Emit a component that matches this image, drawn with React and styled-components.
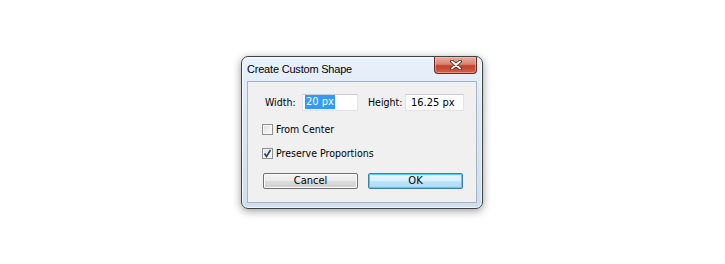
import React from "react";
import styled, { createGlobalStyle } from "styled-components";

const GlobalStyle = createGlobalStyle`
  html, body {
    margin: 0;
    padding: 0;
    background: #ffffff;
  }
  body {
    font-family: "DejaVu Sans Condensed", "DejaVu Sans", sans-serif;
  }
`;

const Page = styled.div`
  width: 100vw;
  height: 100vh;
  display: flex;
  align-items: center;
  justify-content: center;
`;

const Window = styled.div`
  position: relative;
  box-sizing: border-box;
  width: 242px;
  height: 153px;
  margin-left: -1px;
  border: 1px solid #3d4246;
  border-radius: 7px;
  background: linear-gradient(180deg, #eaf2fb 0%, #dce8f6 35%, #cfdef0 100%);
  box-shadow: 0 2px 8px rgba(0, 0, 0, 0.4), inset 0 0 0 1px rgba(255, 255, 255, 0.75);
  display: flex;
  flex-direction: column;
  padding: 0 5px 5px 5px;
`;

const TitleBar = styled.div`
  height: 24px;
  display: flex;
  align-items: center;
  font-family: "Liberation Sans", Arial, sans-serif;
  font-size: 11px;
  letter-spacing: -0.2px;
  color: #000;
`;

const CloseButton = styled.div`
  position: absolute;
  top: 0;
  right: 5px;
  width: 43px;
  height: 17px;
  box-sizing: border-box;
  border: 1px solid #6b2a1f;
  border-top: none;
  border-radius: 0 0 4px 4px;
  background: linear-gradient(180deg, #e9ad9f 0%, #d88371 45%, #c4412b 55%, #d0624a 100%);
  box-shadow: inset 0 0 0 1px rgba(255, 200, 190, 0.5);
  display: flex;
  align-items: center;
  justify-content: center;
`;

const Panel = styled.div`
  flex: 1;
  box-sizing: border-box;
  border: 1px solid #a6b4c4;
  background: #f0f0f0;
  display: flex;
  flex-direction: column;
  gap: 13px;
  padding: 12px 0 0 14px;
  font-size: 10.5px;
  color: #000;
`;

const FieldRow = styled.div`
  display: flex;
  align-items: center;
  height: 17px;
  padding-left: 3px;
`;

const Label = styled.span`
  width: ${(p) => p.$width}px;
  margin-left: ${(p) => p.$gap || 0}px;
`;

const Input = styled.div`
  box-sizing: border-box;
  width: ${(p) => p.$width}px;
  height: 17px;
  background: #fff;
  border: 1px solid #e2e3ea;
  border-top-color: #c9ccd4;
  padding-left: ${(p) => p.$pad}px;
  display: flex;
  align-items: center;
  font-size: 11px;
`;

const Selected = styled.span`
  background: #3399ff;
  color: #fff;
  line-height: 14px;
  padding: 0 1px;
`;

const CheckRow = styled.label`
  display: flex;
  align-items: center;
  height: 11px;
  gap: 3px;
`;

const Box = styled.span`
  box-sizing: border-box;
  width: 11px;
  height: 11px;
  border: 1px solid #8e8f8f;
  background: linear-gradient(135deg, #dcdcdc 0%, #f4f4f4 70%, #fafafa 100%);
  box-shadow: inset 0 0 0 1px #f7f7f7;
  display: flex;
  align-items: center;
  justify-content: center;
`;

const ButtonRow = styled.div`
  display: flex;
  gap: 10px;
  margin-top: 1px;
  padding-left: 1px;
`;

const Button = styled.div`
  box-sizing: border-box;
  width: 95px;
  height: 16px;
  border: 1px solid ${(p) => (p.$primary ? "#3c7fb1" : "#707070")};
  border-radius: 2px;
  background: ${(p) =>
    p.$primary
      ? "linear-gradient(180deg, #eaf6fd 0%, #d9f0fc 50%, #bee6fd 51%, #a7d9f5 100%)"
      : "linear-gradient(180deg, #f2f2f2 0%, #ebebeb 50%, #dddddd 51%, #cfcfcf 100%)"};
  box-shadow: inset 0 0 0 1px ${(p) => (p.$primary ? "#48d0f8" : "#fbfbfb")};
  display: flex;
  align-items: center;
  justify-content: center;
  font-size: 11px;
  color: #000;
`;

const Check = () => (
  <svg width="9" height="9" viewBox="0 0 9 9">
    <path d="M1.5 4.5 L3.5 7.5 L7.5 1" fill="none" stroke="#2a3f6e" strokeWidth="1.6" />
  </svg>
);

const CloseX = () => (
  <svg width="12" height="10" viewBox="0 0 12 10">
    <path d="M2 1.5 L10 8.5 M10 1.5 L2 8.5" stroke="#4a1a12" strokeWidth="3.6" strokeLinecap="round" />
    <path d="M2 1.5 L10 8.5 M10 1.5 L2 8.5" stroke="#ffffff" strokeWidth="2" strokeLinecap="round" />
  </svg>
);

export default function App() {
  return (
    <>
      <GlobalStyle />
      <Page>
        <Window>
          <TitleBar>Create Custom Shape</TitleBar>
          <CloseButton>
            <CloseX />
          </CloseButton>
          <Panel>
            <FieldRow>
              <Label $width={37}>Width:</Label>
              <Input $width={56} $pad={2}>
                <Selected>20 px</Selected>
              </Input>
              <Label $width={37} $gap={10}>Height:</Label>
              <Input $width={59} $pad={5}>16.25 px</Input>
            </FieldRow>
            <CheckRow>
              <Box />
              From Center
            </CheckRow>
            <CheckRow>
              <Box>
                <Check />
              </Box>
              Preserve Proportions
            </CheckRow>
            <ButtonRow>
              <Button>Cancel</Button>
              <Button $primary>OK</Button>
            </ButtonRow>
          </Panel>
        </Window>
      </Page>
    </>
  );
}
